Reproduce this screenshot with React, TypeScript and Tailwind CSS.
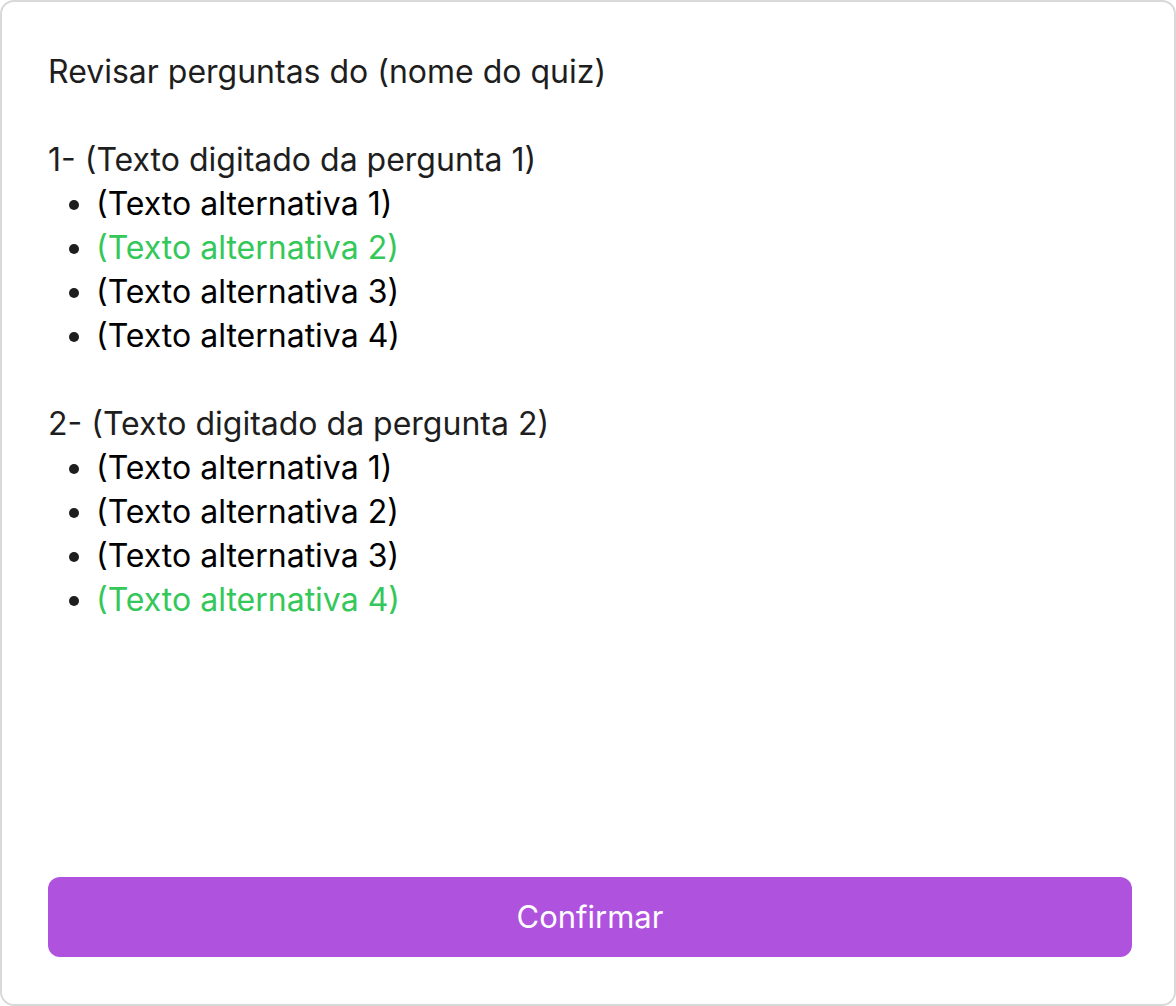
import React from 'react'

const questions = [
  {
    title: '1- (Texto digitado da pergunta 1)',
    options: ['(Texto alternativa 1)', '(Texto alternativa 2)', '(Texto alternativa 3)', '(Texto alternativa 4)'],
    correct: 1,
  },
  {
    title: '2- (Texto digitado da pergunta 2)',
    options: ['(Texto alternativa 1)', '(Texto alternativa 2)', '(Texto alternativa 3)', '(Texto alternativa 4)'],
    correct: 3,
  },
]

export default function App() {
  return (
    <div
      className="w-[1176px] h-[1006px] bg-white"
      style={{ fontFamily: 'Inter, "Noto Sans", sans-serif' }}
    >
      <div className="h-full flex flex-col border-2 border-[#d9d9d9] rounded-[14px] pl-[46px] pr-[42px] pt-[48px] pb-[47px]">
        <div className="flex-1 text-[32px] leading-[44px] text-[#1e1e1e]">
          <p>Revisar perguntas do (nome do quiz)</p>
          <div className="h-[44px]" />
          {questions.map((q, qi) => (
            <div key={qi}>
              <p>{q.title}</p>
              <ul className="list-disc pl-[48px]">
                {q.options.map((opt, i) => (
                  <li
                    key={i}
                    className={
                      i === q.correct
                        ? 'text-[#34c759] marker:text-[#1e1e1e]'
                        : 'text-black marker:text-[#1e1e1e]'
                    }
                  >
                    {opt}
                  </li>
                ))}
              </ul>
              {qi < questions.length - 1 && <div className="h-[44px]" />}
            </div>
          ))}
        </div>
        <button className="h-[80px] w-full rounded-[12px] bg-[#af52de] text-white text-[31px]">
          Confirmar
        </button>
      </div>
    </div>
  )
}
